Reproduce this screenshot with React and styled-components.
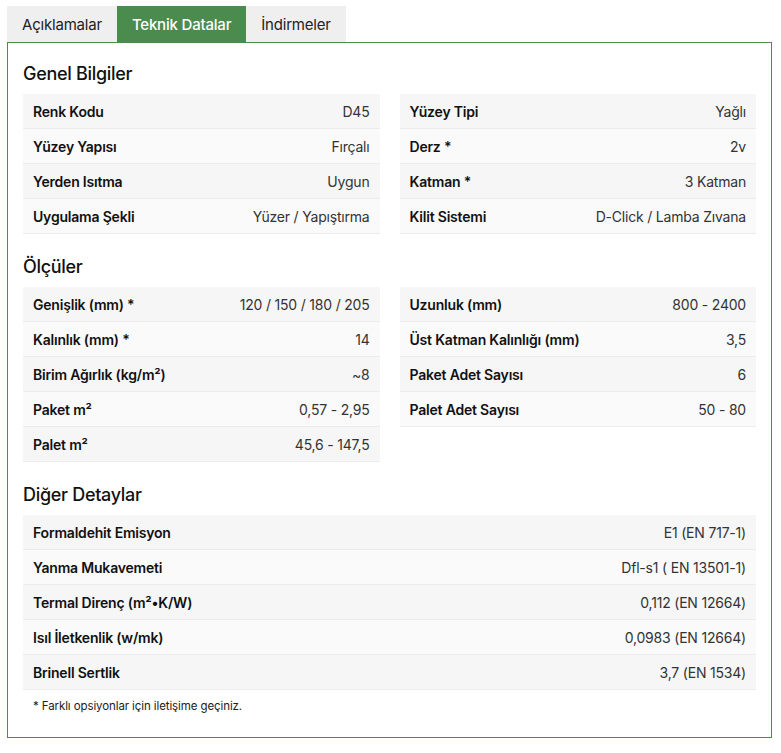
import React from "react";
import styled, { createGlobalStyle } from "styled-components";

const G = createGlobalStyle`
  body{margin:0;background:#fff;font-family:Inter,"Noto Sans",sans-serif;color:#111;}
`;
const Wrap = styled.div`padding:6px 9px 0 7px;`;
const Tabs = styled.div`display:flex;`;
const Tab = styled.div`
  height:36px;display:flex;align-items:center;padding:0 15px;font-size:15px;letter-spacing:-0.2px;
  background:${p=>p.$active?"#4b8b4e":"#efefef"};color:${p=>p.$active?"#fff":"#222"};
  font-weight:${p=>p.$active?500:400};
`;
const Panel = styled.div`border:1px solid #4b8b4e;padding:20px 15px 24px;`;
const H = styled.h2`font-size:18px;font-weight:500;margin:0 0 10px;letter-spacing:-0.3px;`;
const Grid = styled.div`display:grid;grid-template-columns:${p=>p.$one?"1fr":"1fr 1fr"};column-gap:20px;align-items:start;margin-bottom:${p=>p.$mb||0}px;`;
const Col = styled.div``;
const Row = styled.div`
  height:35px;display:flex;justify-content:space-between;align-items:center;padding:0 10px;
  font-size:14px;letter-spacing:-0.2px;background:${p=>p.$odd?"#f6f6f6":"#fafafa"};
  border-bottom:1px solid #ececec;box-sizing:border-box;
`;
const L = styled.span`font-weight:600;`;
const V = styled.span`color:#333;`;
const Note = styled.div`font-size:11.5px;margin:9px 0 0 10px;color:#222;letter-spacing:-0.1px;`;

const Table = ({rows}) => <Col>{rows.map((r,i)=><Row key={i} $odd={i%2===0}><L>{r[0]}</L><V>{r[1]}</V></Row>)}</Col>;

export default function App(){
  return <Wrap><G/>
    <Tabs><Tab>Açıklamalar</Tab><Tab $active>Teknik Datalar</Tab><Tab>İndirmeler</Tab></Tabs>
    <Panel>
      <H>Genel Bilgiler</H>
      <Grid $mb={22}>
        <Table rows={[["Renk Kodu","D45"],["Yüzey Yapısı","Fırçalı"],["Yerden Isıtma","Uygun"],["Uygulama Şekli","Yüzer / Yapıştırma"]]}/>
        <Table rows={[["Yüzey Tipi","Yağlı"],["Derz *","2v"],["Katman *","3 Katman"],["Kilit Sistemi","D-Click / Lamba Zıvana"]]}/>
      </Grid>
      <H>Ölçüler</H>
      <Grid $mb={22}>
        <Table rows={[["Genişlik (mm) *","120 / 150 / 180 / 205"],["Kalınlık (mm) *","14"],["Birim Ağırlık (kg/m²)","~8"],["Paket m²","0,57 - 2,95"],["Palet m²","45,6 - 147,5"]]}/>
        <Table rows={[["Uzunluk (mm)","800 - 2400"],["Üst Katman Kalınlığı (mm)","3,5"],["Paket Adet Sayısı","6"],["Palet Adet Sayısı","50 - 80"]]}/>
      </Grid>
      <H>Diğer Detaylar</H>
      <Grid $one>
        <Table rows={[["Formaldehit Emisyon","E1 (EN 717-1)"],["Yanma Mukavemeti","Dfl-s1 ( EN 13501-1)"],["Termal Direnç (m²•K/W)","0,112 (EN 12664)"],["Isıl İletkenlik (w/mk)","0,0983 (EN 12664)"],["Brinell Sertlik","3,7 (EN 1534)"]]}/>
      </Grid>
      <Note>* Farklı opsiyonlar için iletişime geçiniz.</Note>
    </Panel>
  </Wrap>;
}
